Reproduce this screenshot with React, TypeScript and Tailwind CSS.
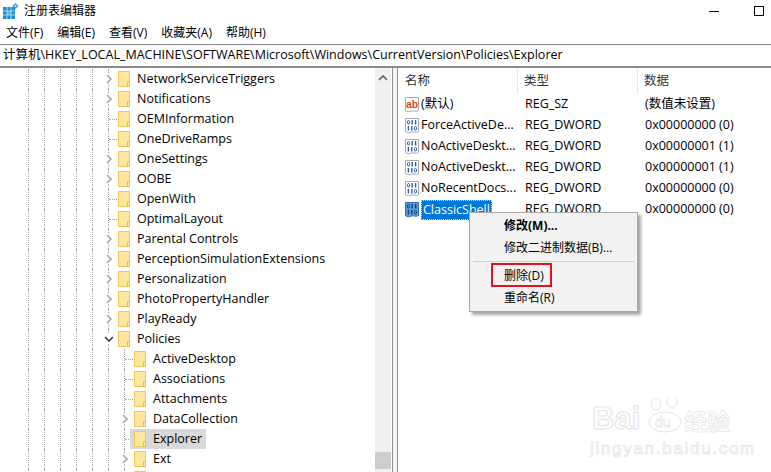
import React from 'react';

const FONT = '"Open Sans", "Noto Sans CJK SC", sans-serif';

function Folder() {
  return (
    <svg width="13" height="16" viewBox="0 0 13 16" className="shrink-0">
      <path d="M0.5 0.5H11.5V15.5H0.5Z" fill="#ffe79f" stroke="#eec65a" />
      <path d="M9.5 10.5H11.5V15.5H9.5Z" fill="#fff0bd" stroke="#e8bc48" />
    </svg>
  );
}

function Chevron({ open }: { open?: boolean }) {
  return (
    <svg width="10" height="10" viewBox="0 0 10 10" className="absolute left-[-5px] top-[5px] bg-white">
      {open ? (
        <path d="M1 3L5 7L9 3" fill="none" stroke="#404040" strokeWidth="1.6" />
      ) : (
        <path d="M3 1L7 5L3 9" fill="none" stroke="#a6a6a6" strokeWidth="1.6" />
      )}
    </svg>
  );
}

type TreeItem = {
  name: string;
  level: 1 | 2;
  toggle?: 'closed' | 'open';
  selected?: boolean;
};

const treeItems: TreeItem[] = [
  { name: 'NetworkServiceTriggers', level: 1, toggle: 'closed' },
  { name: 'Notifications', level: 1, toggle: 'closed' },
  { name: 'OEMInformation', level: 1 },
  { name: 'OneDriveRamps', level: 1 },
  { name: 'OneSettings', level: 1, toggle: 'closed' },
  { name: 'OOBE', level: 1, toggle: 'closed' },
  { name: 'OpenWith', level: 1 },
  { name: 'OptimalLayout', level: 1 },
  { name: 'Parental Controls', level: 1, toggle: 'closed' },
  { name: 'PerceptionSimulationExtensions', level: 1, toggle: 'closed' },
  { name: 'Personalization', level: 1, toggle: 'closed' },
  { name: 'PhotoPropertyHandler', level: 1, toggle: 'closed' },
  { name: 'PlayReady', level: 1, toggle: 'closed' },
  { name: 'Policies', level: 1, toggle: 'open' },
  { name: 'ActiveDesktop', level: 2 },
  { name: 'Associations', level: 2 },
  { name: 'Attachments', level: 2 },
  { name: 'DataCollection', level: 2, toggle: 'closed' },
  { name: 'Explorer', level: 2, selected: true },
  { name: 'Ext', level: 2, toggle: 'closed' },
  { name: '', level: 2 },
];

function TreeRow({ item }: { item: TreeItem }) {
  const guides = item.level === 1 ? 5 : 6;
  return (
    <div className="flex h-5 shrink-0 items-stretch pl-[28px]">
      {Array.from({ length: guides }).map((_, i) => (
        <div key={i} className="w-4 shrink-0 border-l border-dotted border-[#a0a0a0]" />
      ))}
      <div className="relative w-[10px] shrink-0 border-l border-dotted border-[#a0a0a0]">
        {item.toggle ? (
          <Chevron open={item.toggle === 'open'} />
        ) : (
          <div className="mt-[10px] w-[8px] border-t border-dotted border-[#a0a0a0]" />
        )}
      </div>
      <div className="relative flex items-center">
        {item.selected && <div className="absolute inset-y-0 left-[-4px] w-[76px] bg-[#d9d9d9]" />}
        <div className="relative flex items-center gap-[6px]">
          <Folder />
          <span className="whitespace-nowrap text-[12.5px] leading-5 text-black">{item.name}</span>
        </div>
      </div>
    </div>
  );
}

function BinIcon({ selected }: { selected?: boolean }) {
  const ink = selected ? '#0d3f7a' : '#2a5db0';
  return (
    <svg width="16" height="16" viewBox="0 0 16 16" className="shrink-0">
      <path
        d="M1.5 0.5H14.5V13.5C12 15.5 10 13 7.5 14C5.5 15 3.5 15 1.5 13.5Z"
        fill={selected ? '#5aa0de' : '#fff'}
        stroke={selected ? '#2a6fb5' : '#a8a8a8'}
      />
      <rect x="3.5" y="2.5" width="2" height="3.5" rx="1" fill="none" stroke={ink} />
      <path d="M8.2 2V6.5M11.6 2V6.5" stroke={ink} strokeWidth="1.4" />
      <path d="M4.4 8V12.5M7.8 8V12.5" stroke={ink} strokeWidth="1.4" />
      <rect x="10.5" y="8.5" width="2" height="3.5" rx="1" fill="none" stroke={ink} />
    </svg>
  );
}

function AbIcon() {
  return (
    <svg width="16" height="16" viewBox="0 0 16 16" className="shrink-0">
      <path
        d="M1.5 0.5H14.5V13.5C12 15.5 10 13 7.5 14C5.5 15 3.5 15 1.5 13.5Z"
        fill="#fff"
        stroke="#a8a8a8"
      />
      <text x="2" y="10.5" fontSize="10.5" fontWeight="700" fill="#dc4a20" fontFamily='"Liberation Sans", sans-serif'>
        ab
      </text>
    </svg>
  );
}

const valueRows = [
  { name: '(默认)', type: 'REG_SZ', data: '(数值未设置)', ab: true },
  { name: 'ForceActiveDe...', type: 'REG_DWORD', data: '0x00000000 (0)' },
  { name: 'NoActiveDeskt...', type: 'REG_DWORD', data: '0x00000001 (1)' },
  { name: 'NoActiveDeskt...', type: 'REG_DWORD', data: '0x00000001 (1)' },
  { name: 'NoRecentDocs...', type: 'REG_DWORD', data: '0x00000000 (0)' },
  { name: 'ClassicShell', type: 'REG_DWORD', data: '0x00000000 (0)', selected: true },
];

function ContextMenu() {
  return (
    <div className="absolute left-[469px] top-[212px] z-10 h-[100px] w-[169px] border border-[#a8a8a8] bg-[#f2f2f2] pt-[2px] text-[12px] leading-[22px] text-black shadow-[3px_3px_3px_rgba(0,0,0,0.35)]">
      <div className="pl-[34px] font-bold">修改(M)...</div>
      <div className="pl-[34px]">修改二进制数据(B)...</div>
      <div className="mx-[3px] mb-[3px] mt-[2px] border-t border-[#cfcfcf]" />
      <div className="relative pl-[34px]">
        删除(D)
        <div className="absolute left-[21px] top-[-2px] h-[24px] w-[61px] border-2 border-[#e0141c]" />
      </div>
      <div className="pl-[34px]">重命名(R)</div>
    </div>
  );
}

function Watermark() {
  return (
    <div className="pointer-events-none absolute left-[590px] top-[398px] z-20 w-[142px]">
      <div className="flex h-[36px] items-end">
        <span
          className="ml-[2px] text-[31px] font-bold leading-[31px] text-transparent [-webkit-text-stroke:1px_#e4e4e4]"
          style={{ fontFamily: '"Liberation Sans", sans-serif' }}
        >
          Bai
        </span>
        <svg width="42" height="36" viewBox="0 0 42 36" className="ml-[5px] shrink-0">
          <ellipse cx="20" cy="24" rx="16" ry="10" fill="none" stroke="#e4e4e4" />
          <ellipse cx="11" cy="6" rx="5" ry="6" fill="none" stroke="#e4e4e4" />
          <ellipse cx="27" cy="4" rx="5" ry="6" fill="none" stroke="#e4e4e4" />
          <text x="10" y="29" fontSize="14" fill="none" stroke="#e4e4e4" strokeWidth="0.6" fontFamily='"Liberation Sans", sans-serif'>
            du
          </text>
        </svg>
        <span className="ml-[-3px] text-[23px] font-bold leading-[26px] text-transparent [-webkit-text-stroke:0.7px_#e4e4e4]">
          经验
        </span>
      </div>
      <div
        className="mt-[6px] whitespace-nowrap text-[17px] leading-[18px] tracking-[1.7px] text-transparent [-webkit-text-stroke:0.7px_#e4e4e4]"
        style={{ fontFamily: '"Liberation Sans", sans-serif' }}
      >
        jingyan.baidu.com
      </div>
    </div>
  );
}

export default function App() {
  return (
    <div
      className="relative flex h-[472px] w-[771px] flex-col overflow-hidden bg-white text-black"
      style={{ fontFamily: FONT }}
    >
      {/* title bar */}
      <div className="flex h-[22px] shrink-0 items-center pl-[3px]">
        <svg width="16" height="16" viewBox="0 0 16 16" className="shrink-0">
          <path d="M0 4H12V16H0Z" fill="#1c8fd0" />
          <path d="M4 8H8V12H4Z" fill="#4db5e8" />
          <path d="M4 4V16M8 4V16M0 8H12M0 12H12" stroke="#d8eefa" strokeWidth="0.7" />
          <path d="M12.5 0L15.5 3L12.5 6L9.5 3Z" fill="#2f9fdc" />
          <circle cx="12.5" cy="3" r="1" fill="#c9ecff" />
        </svg>
        <span className="ml-[5px] text-[12px] leading-none">注册表编辑器</span>
        <div className="ml-auto mr-[7px] flex items-center gap-[35px]">
          <div className="h-[1px] w-[10px] bg-black" />
          <div className="h-[10px] w-[10px] border border-black" />
        </div>
      </div>

      {/* menu bar */}
      <div className="flex h-[22px] shrink-0 items-center gap-[14px] pl-[6px] text-[12px]">
        <span>文件(F)</span>
        <span>编辑(E)</span>
        <span>查看(V)</span>
        <span>收藏夹(A)</span>
        <span>帮助(H)</span>
      </div>

      {/* address bar */}
      <div className="flex h-[24px] shrink-0 items-center border-t border-b-2 border-[#8a8a8a] pl-[3px] text-[12.5px]">
        计算机\HKEY_LOCAL_MACHINE\SOFTWARE\Microsoft\Windows\CurrentVersion\Policies\Explorer
      </div>

      <div className="flex min-h-0 flex-1">
        {/* tree */}
        <div className="flex w-[375px] shrink-0 flex-col overflow-hidden pt-px">
          {treeItems.map((item, i) => (
            <TreeRow key={i} item={item} />
          ))}
        </div>

        {/* scrollbar */}
        <div className="flex w-4 shrink-0 flex-col items-center justify-between bg-[#f0f0f0] pb-[3px] pt-[6px]">
          <svg width="10" height="8" viewBox="0 0 10 8">
            <path d="M1 6L5 2L9 6" fill="none" stroke="#606060" strokeWidth="1.6" />
          </svg>
          <div className="h-[17px] w-full bg-[#cdcdcd]" />
        </div>

        {/* splitter */}
        <div className="ml-px w-[6px] shrink-0 border-x border-[#8f8f9a] bg-[#f4f4f4]" />

        {/* values */}
        <div className="min-w-0 flex-1 overflow-hidden pt-px text-[12.5px]">
          <div className="flex h-[25px] items-center text-[#333]">
            <div className="h-full w-[120px] shrink-0 border-r border-[#e5e5e5] pl-[7px] leading-[24px]">名称</div>
            <div className="h-full w-[120px] shrink-0 border-r border-[#e5e5e5] pl-[6px] leading-[24px]">类型</div>
            <div className="h-full pl-[6px] leading-[24px]">数据</div>
          </div>
          {valueRows.map((row, i) => (
            <div key={i} className="flex h-[21px] items-center">
              <div className="flex w-[120px] shrink-0 items-center pl-[6px]">
                {row.ab ? <AbIcon /> : <BinIcon selected={row.selected} />}
                {row.selected ? (
                  <span className="ml-px border border-dotted border-[#ffd27a] bg-[#0078d7] px-[1px] leading-[18px] text-white">
                    {row.name}
                  </span>
                ) : (
                  <span className="ml-px whitespace-nowrap">{row.name}</span>
                )}
              </div>
              <div className="w-[120px] shrink-0 pl-[7px]">{row.type}</div>
              <div className="whitespace-nowrap pl-[7px]">{row.data}</div>
            </div>
          ))}
        </div>
      </div>

      <ContextMenu />
      <Watermark />
    </div>
  );
}
